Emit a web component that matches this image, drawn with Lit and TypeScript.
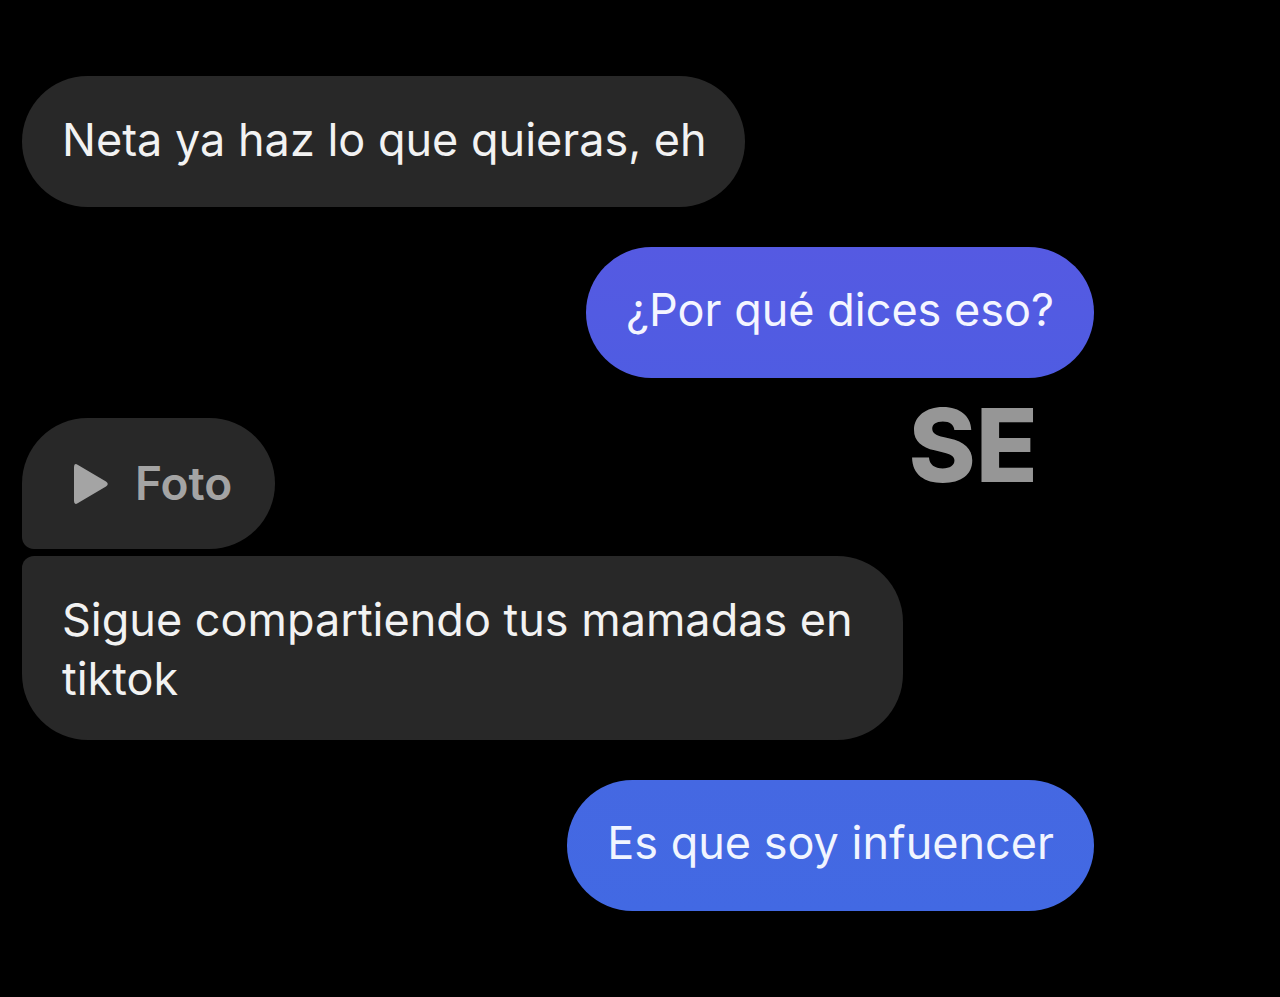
import { LitElement, html, css } from "lit";
import { customElement, property } from "lit/decorators.js";

@customElement("chat-bubble")
class ChatBubble extends LitElement {
  @property({ reflect: true }) tone = "received";
  @property({ reflect: true }) join = "";

  static styles = css`
    :host {
      display: block;
      box-sizing: border-box;
      max-width: min(881px, 100%);
      min-height: 131px;
      padding: 34px 38px 32px 40px;
      border-radius: 66px;
      background: #282828;
      color: #f2f2f2;
      font-size: 45px;
      line-height: 59px;
    }
    :host([tone="violet"]),
    :host([tone="blue"]) {
      align-self: flex-end;
      padding: 33px 40px;
    }
    :host([tone="violet"]) {
      background: linear-gradient(#555ae2, #4f5ce2);
      color: #f4f5ff;
    }
    :host([tone="blue"]) {
      background: linear-gradient(#4568e2, #4269e3);
      color: #f1f5ff;
    }
    :host([join="below"]) {
      border-bottom-left-radius: 12px;
    }
    :host([join="above"]) {
      border-top-left-radius: 12px;
    }
  `;

  render() {
    return html`<slot></slot>`;
  }
}

@customElement("app-root")
class AppRoot extends LitElement {
  static styles = css`
    :host {
      display: block;
      box-sizing: border-box;
      min-height: 100vh;
      background: #000;
      font-family: Inter, "Liberation Sans", sans-serif;
    }
    .thread {
      display: flex;
      flex-direction: column;
      align-items: flex-start;
      gap: 40px;
      padding: 76px 186px 76px 22px;
    }
    .group {
      display: flex;
      flex-direction: column;
      align-items: flex-start;
      gap: 7px;
      width: 100%;
      position: relative;
    }
    .photo {
      display: flex;
      align-items: center;
      gap: 27px;
      padding: 2px 5px 2px 12px;
      border: 0;
      background: none;
      color: #a4a4a4;
      font: inherit;
      font-size: 46px;
      font-weight: 600;
      cursor: pointer;
    }
    .play {
      width: 34px;
      height: 40px;
      fill: currentColor;
    }
    .caption {
      position: absolute;
      top: -33px;
      right: 56px;
      color: #969696;
      font-size: 102px;
      font-weight: 800;
      line-height: 120px;
    }
  `;

  render() {
    return html`
      <main class="thread">
        <chat-bubble>Neta ya haz lo que quieras, eh</chat-bubble>
        <chat-bubble tone="violet">¿Por qué dices eso?</chat-bubble>
        <div class="group">
          <chat-bubble join="below">
            <button class="photo" type="button">
              <svg class="play" viewBox="0 0 34 40" aria-hidden="true">
                <path d="M0 3Q0-1.500 4 1L32 17.500Q35.500 20 32 22.500L4 39Q0 41.500 0 37Z" />
              </svg>
              Foto
            </button>
          </chat-bubble>
          <chat-bubble join="above">Sigue compartiendo tus mamadas en tiktok</chat-bubble>
          <span class="caption">SE</span>
        </div>
        <chat-bubble tone="blue">Es que soy infuencer</chat-bubble>
      </main>
    `;
  }
}
